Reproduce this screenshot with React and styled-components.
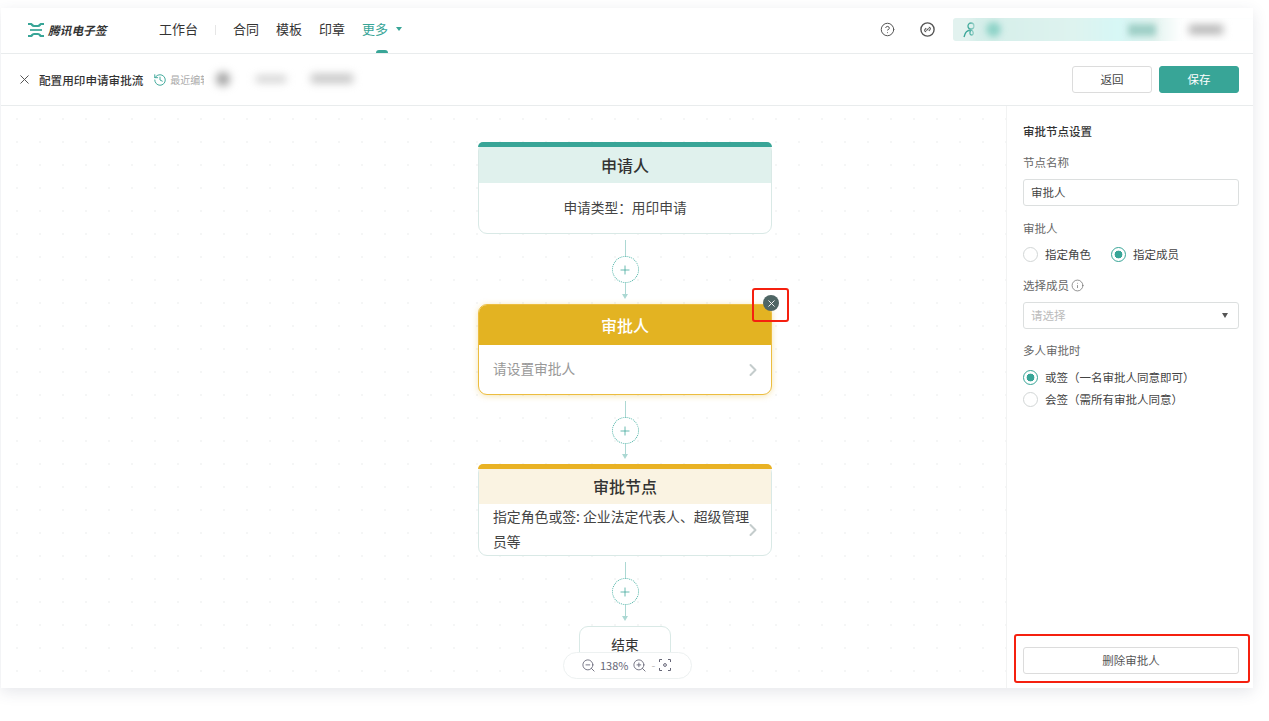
import React from "react";
import styled, { createGlobalStyle } from "styled-components";
import { ChevronRight, CircleHelp, History, Info, Plus, X, ZoomIn, ZoomOut } from "lucide-react";

const GlobalStyle = createGlobalStyle`
  html, body {
    margin: 0;
    background: #fff;
  }
  * {
    box-sizing: border-box;
  }
  body {
    font-family: "Noto Sans CJK SC", "Noto Sans", sans-serif;
    color: #333;
  }
`;

const NAV_ITEMS = ["合同", "模板", "印章"];

const Logo = () => (
  <LogoWrap>
    <svg width="16" height="14" viewBox="0 0 16 14" fill="none" stroke="#38a597" strokeWidth="2.2">
      <path d="M0 1 H3 C4 1 4 3 6 3 H10 C12 3 12 1 13 1 H16" />
      <path d="M2 7 H14" strokeWidth="1.7" />
      <path d="M0 13 H3 C4 13 4 11 6 11 H10 C12 11 12 13 13 13 H16" />
    </svg>
    <LogoText>腾讯电子签</LogoText>
  </LogoWrap>
);

const Connector = ({ height = 70 }) => (
  <ConnectorWrap height={height}>
    <ConnectorLine fixed />
    <AddButton>
      <Plus size={14} strokeWidth={1.3} />
    </AddButton>
    <ConnectorLine />
    <ConnectorArrow />
  </ConnectorWrap>
);

const Radio = ({ checked, children }) => (
  <RadioLabel>
    <RadioDot checked={checked} />
    {children}
  </RadioLabel>
);

const App = () => {
  return (
    <>
      <GlobalStyle />
      <Page>
        <Window>
          <Header>
            <Logo />
            <NavItem>工作台</NavItem>
            <NavDivider />
            {NAV_ITEMS.map(item => (
              <NavItem key={item}>{item}</NavItem>
            ))}
            <NavItem active>
              更多
              <Caret />
              <ActiveDot />
            </NavItem>
            <HeaderRight>
              <HeaderIcon>
                <CircleHelp size={15} strokeWidth={1.6} />
              </HeaderIcon>
              <HeaderIcon last>
                <svg width="15" height="15" viewBox="0 0 15 15" fill="none" stroke="currentColor" strokeWidth="1.4">
                  <circle cx="7.5" cy="7.5" r="6.6" />
                  <path d="M6.2 9.7 a1.4 1.4 0 0 1 -1.2 -2.3 l1.2 -1.2" strokeWidth="1.1" />
                  <path d="M8.8 5.3 a1.4 1.4 0 0 1 1.2 2.3 l-1.2 1.2" strokeWidth="1.1" />
                  <path d="M6.3 8.7 L8.7 6.3" strokeWidth="1.1" />
                </svg>
              </HeaderIcon>
              <UserPill>
                <svg width="13" height="16" viewBox="0 0 13 16" fill="none" stroke="#38a597" strokeWidth="1.3">
                  <circle cx="8" cy="4" r="3" />
                  <path d="M1 15 C2 10 5 8 8 8 C11 9 11 13 8.5 13 C6.5 13 6.5 10 8 8" />
                </svg>
                <PillBlur />
                <PillBlobLeft />
                <PillBlobMiddle />
                <PillBlobRight />
              </UserPill>
            </HeaderRight>
          </Header>

          <SubBar>
            <CloseIcon>
              <X size={15} strokeWidth={1.6} />
            </CloseIcon>
            <SubTitle>配置用印申请审批流</SubTitle>
            <EditInfo>
              <History size={14} strokeWidth={1.6} color="#38a597" />
              最近编辑
              <EditBlur />
              <EditBlobA />
              <EditBlobB />
              <EditBlobC />
            </EditInfo>
            <SubActions>
              <Button>返回</Button>
              <Button primary>保存</Button>
            </SubActions>
          </SubBar>

          <Body>
            <Canvas>
              <FlowColumn>
                <Node>
                  <NodeBar color="#38a597" />
                  <NodeHead height={36}>申请人</NodeHead>
                  <NodeBody center height={50}>申请类型：用印申请</NodeBody>
                </Node>
                <Connector />
                <Node selected>
                  <NodeHead height={40} fill="#e3b322" light>审批人</NodeHead>
                  <NodeBody muted height={49}>
                    请设置审批人
                    <Chevron><ChevronRight size={20} strokeWidth={2.4} /></Chevron>
                  </NodeBody>
                  <NodeDelete>
                    <X size={11} strokeWidth={2} />
                  </NodeDelete>
                  <RedMark />
                </Node>
                <Connector height={69} />
                <Node>
                  <NodeBar color="#e9b224" />
                  <NodeHead height={35} fill="#faf3e2">审批节点</NodeHead>
                  <NodeBody wrap height={51}>
                    指定角色或签: 企业法定代表人、超级管理员等
                    <Chevron><ChevronRight size={20} strokeWidth={2.4} /></Chevron>
                  </NodeBody>
                </Node>
                <Connector />
                <EndNode>结束</EndNode>
              </FlowColumn>
              <ZoomBar>
                <ZoomOut size={15} strokeWidth={1.4} />
                <span>138%</span>
                <ZoomIn size={15} strokeWidth={1.4} />
                <ZoomDash>-</ZoomDash>
                <svg width="12" height="12" viewBox="0 0 12 12" fill="none" stroke="#667" strokeWidth="1">
                  <path d="M0.5 3 V0.5 H3 M9 0.5 H11.5 V3 M11.5 9 V11.5 H9 M3 11.5 H0.5 V9" />
                  <circle cx="6" cy="6" r="1.4" />
                </svg>
              </ZoomBar>
            </Canvas>

            <Panel>
              <PanelTitle>审批节点设置</PanelTitle>
              <FieldLabel gap={9}>节点名称</FieldLabel>
              <TextField>审批人</TextField>
              <FieldLabel top={14} gap={10}>审批人</FieldLabel>
              <RadioRow>
                <Radio>指定角色</Radio>
                <Radio checked>指定成员</Radio>
              </RadioRow>
              <FieldLabel top={15} gap={9}>
                选择成员
                <Info size={13} strokeWidth={1.3} />
              </FieldLabel>
              <TextField placeholder>
                请选择
                <SelectCaret />
              </TextField>
              <FieldLabel top={13} gap={11}>多人审批时</FieldLabel>
              <RadioStack>
                <Radio checked>或签（一名审批人同意即可）</Radio>
                <Radio>会签（需所有审批人同意）</Radio>
              </RadioStack>
              <DeleteWrap>
                <DeleteButton>删除审批人</DeleteButton>
                <DeleteMark />
              </DeleteWrap>
            </Panel>
          </Body>
        </Window>
      </Page>
    </>
  );
};

const Page = styled.div`
  width: 1269px;
  height: 721px;
  padding: 8px 0 0 1px;
  overflow: hidden;
`;

const Window = styled.div`
  width: 1252px;
  height: 680px;
  display: flex;
  flex-direction: column;
  background: #fff;
  box-shadow: 0 4px 14px rgba(60, 70, 100, 0.13);
`;

const Header = styled.header`
  height: 46px;
  flex: none;
  display: flex;
  align-items: center;
  padding: 0 0 2px 27px;
  border-bottom: 1px solid #e9eced;
`;

const LogoWrap = styled.div`
  width: 131px;
  display: flex;
  align-items: center;
  gap: 4px;
`;

const LogoText = styled.span`
  font-size: 11.7px;
  font-weight: 700;
  font-style: italic;
  color: #333;
  padding-bottom: 1px;
`;

const NavItem = styled.div`
  position: relative;
  display: flex;
  align-items: center;
  height: 100%;
  margin-right: 17px;
  padding-bottom: 2px;
  font-size: 13px;
  color: ${props => (props.active ? "#38a597" : "#333")};
`;

const NavDivider = styled.div`
  width: 1px;
  height: 10px;
  margin-right: 17px;
  background: #e6e6e6;
`;

const Caret = styled.span`
  margin-left: 8px;
  border-left: 3.5px solid transparent;
  border-right: 3.5px solid transparent;
  border-top: 4.5px solid #38a597;
`;

const ActiveDot = styled.span`
  position: absolute;
  left: 14px;
  bottom: -2px;
  width: 12px;
  height: 3px;
  border-radius: 6px 6px 0 0;
  background: #38a597;
`;

const HeaderRight = styled.div`
  margin-left: auto;
  display: flex;
  align-items: center;
`;

const HeaderIcon = styled.div`
  display: flex;
  margin-right: ${props => (props.last ? "18px" : "25px")};
  color: #555;
`;

const UserPill = styled.div`
  position: relative;
  width: 300px;
  height: 23px;
  display: flex;
  align-items: center;
  padding-left: 10px;
  border-radius: 3px 0 0 3px;
  background: #e2f2ef;
  overflow: hidden;
`;

const PillBlur = styled.div`
  position: absolute;
  left: 20px;
  top: -4px;
  width: 290px;
  height: 32px;
  background: linear-gradient(90deg, #d4eee9 0%, #def3ef 35%, #d6f7f6 50%, #e2f3ef 62%, #fff 72%);
  filter: blur(3px);
`;

const PillBlobLeft = styled.div`
  position: absolute;
  left: 33px;
  top: 4px;
  width: 15px;
  height: 15px;
  border-radius: 50%;
  background: #8fd3c8;
  filter: blur(3px);
`;

const PillBlobMiddle = styled.div`
  position: absolute;
  left: 175px;
  top: 6px;
  width: 28px;
  height: 12px;
  background: #9fcfc7;
  filter: blur(3px);
`;

const PillBlobRight = styled.div`
  position: absolute;
  left: 236px;
  top: 7px;
  width: 34px;
  height: 9px;
  background: #b0b0b0;
  filter: blur(4px);
`;

const SubBar = styled.div`
  height: 52px;
  flex: none;
  display: flex;
  align-items: center;
  padding: 0 14px 0 16px;
  border-bottom: 1px solid #e9eced;
`;

const CloseIcon = styled.div`
  display: flex;
  margin-right: 7px;
  color: #555;
`;

const SubTitle = styled.div`
  font-size: 11.6px;
  font-weight: 500;
  color: #333;
  margin-right: 10px;
`;

const EditInfo = styled.div`
  position: relative;
  display: flex;
  align-items: center;
  gap: 3px;
  font-size: 10px;
  color: #aaa;
`;

const EditBlur = styled.div`
  position: absolute;
  left: 51px;
  top: -8px;
  width: 160px;
  height: 32px;
  background: #fff;
`;

const EditBlobA = styled.div`
  position: absolute;
  left: 63px;
  top: 0;
  width: 14px;
  height: 14px;
  border-radius: 50%;
  background: #a0a0a0;
  filter: blur(4px);
`;

const EditBlobB = styled.div`
  position: absolute;
  left: 103px;
  top: 4px;
  width: 30px;
  height: 6px;
  background: #c8c8c8;
  filter: blur(4px);
`;

const EditBlobC = styled.div`
  position: absolute;
  left: 158px;
  top: 2px;
  width: 42px;
  height: 9px;
  background: #c4c4c4;
  filter: blur(4px);
`;

const SubActions = styled.div`
  margin-left: auto;
  display: flex;
  gap: 7px;
`;

const Button = styled.button`
  width: 80px;
  height: 27px;
  padding: 0 0 2px;
  border-radius: 3px;
  border: 1px solid ${props => (props.primary ? "#38a597" : "#dcdcdc")};
  background: ${props => (props.primary ? "#38a597" : "#fff")};
  color: ${props => (props.primary ? "#fff" : "#444")};
  font: inherit;
  font-size: 11.5px;
`;

const Body = styled.div`
  flex: 1;
  min-height: 0;
  display: flex;
`;

const Canvas = styled.div`
  position: relative;
  flex: 1;
  overflow: hidden;
  padding: 36px 0 0 477px;
  background-image: radial-gradient(circle, #d6dcdc 0.7px, transparent 1px);
  background-size: 23px 23px;
  background-position: 4.5px 1.5px;
`;

const FlowColumn = styled.div`
  width: 294px;
  display: flex;
  flex-direction: column;
  align-items: center;
`;

const Node = styled.div`
  position: relative;
  width: 100%;
  border-radius: 9px;
  background: #fff;
  border: 1px solid ${props => (props.selected ? "#ecbd3f" : "#d9e9e6")};
  box-shadow: ${props => (props.selected ? "0 1px 6px rgba(227, 179, 34, 0.35)" : "none")};
`;

const NodeBar = styled.div`
  height: 5px;
  margin: -1px -1px 0;
  border-radius: 9px 9px 0 0;
  background: ${props => props.color};
`;

const NodeHead = styled.div`
  height: ${props => props.height}px;
  display: flex;
  align-items: center;
  justify-content: center;
  padding-bottom: 1px;
  background: ${props => props.fill || "#e0f1ed"};
  color: ${props => (props.light ? "#fff" : "#333")};
  font-size: 16px;
  font-weight: 500;
  border-radius: ${props => (props.light ? "8px 8px 0 0" : "0")};
`;

const NodeBody = styled.div`
  position: relative;
  min-height: ${props => props.height}px;
  display: flex;
  align-items: center;
  justify-content: ${props => (props.center ? "center" : "flex-start")};
  padding: ${props => (props.wrap ? "0 18px 1px 14px" : props.muted ? "0 14px 4px" : "0 14px 2px")};
  font-size: ${props => (props.wrap ? "13.85px" : "13.7px")};
  line-height: ${props => (props.wrap ? "25px" : "20px")};
  color: ${props => (props.muted ? "#999" : "#444")};
`;

const Chevron = styled.span`
  position: absolute;
  right: 8px;
  top: 50%;
  display: flex;
  transform: translateY(-50%);
  color: #c4cccc;
`;

const NodeDelete = styled.div`
  position: absolute;
  top: -10px;
  right: -8px;
  width: 16px;
  height: 16px;
  display: flex;
  align-items: center;
  justify-content: center;
  border-radius: 50%;
  background: #4f6665;
  color: #fff;
`;

const RedMark = styled.div`
  position: absolute;
  top: -17px;
  right: -18px;
  width: 37px;
  height: 34px;
  border: 2px solid #f5200f;
  border-radius: 3px;
`;

const ConnectorWrap = styled.div`
  height: ${props => props.height}px;
  padding-top: 6px;
  display: flex;
  flex-direction: column;
  align-items: center;
`;

const ConnectorLine = styled.div`
  width: 1px;
  flex: ${props => (props.fixed ? "none" : "1")};
  height: ${props => (props.fixed ? "16px" : "auto")};
  background: #acd8d3;
`;

const ConnectorArrow = styled.div`
  border-left: 3.5px solid transparent;
  border-right: 3.5px solid transparent;
  border-top: 5px solid #acd8d3;
  margin-bottom: 5px;
`;

const AddButton = styled.div`
  width: 27px;
  height: 27px;
  flex: none;
  display: flex;
  align-items: center;
  justify-content: center;
  border-radius: 50%;
  border: 1.5px dotted #4db3a6;
  background: #fff;
  color: #38a597;
`;

const EndNode = styled.div`
  width: 92px;
  height: 50px;
  padding-top: 7px;
  text-align: center;
  border: 1px solid #d9e9e6;
  border-radius: 9px;
  background: #fff;
  font-size: 13.7px;
  color: #333;
`;

const ZoomBar = styled.div`
  position: absolute;
  left: 562px;
  bottom: 9px;
  width: 129px;
  height: 27px;
  display: flex;
  align-items: center;
  gap: 4px;
  padding: 0 0 1px 17px;
  border: 1px solid #edf1f1;
  border-radius: 14px;
  background: #fff;
  color: #667;
  font-size: 11px;
`;

const ZoomDash = styled.span`
  color: #bbb;
`;

const Panel = styled.aside`
  width: 247px;
  flex: none;
  display: flex;
  flex-direction: column;
  padding: 17px 14px 14px 16px;
  background: #fff;
  border-left: 1px solid #f2f3f3;
`;

const PanelTitle = styled.div`
  font-size: 11.5px;
  font-weight: 500;
  line-height: 16px;
  color: #333;
  margin-bottom: 15px;
`;

const FieldLabel = styled.div`
  display: flex;
  align-items: center;
  gap: 2px;
  font-size: 11.5px;
  line-height: 16px;
  color: #666;
  margin-top: ${props => props.top || 0}px;
  margin-bottom: ${props => props.gap}px;
`;

const TextField = styled.div`
  position: relative;
  height: 27px;
  display: flex;
  align-items: center;
  padding: 0 7px 2px;
  border: 1px solid #dcdfdf;
  border-radius: 3px;
  font-size: 11.5px;
  color: ${props => (props.placeholder ? "#bbb" : "#444")};
`;

const SelectCaret = styled.span`
  position: absolute;
  right: 10px;
  top: 10px;
  border-left: 3.5px solid transparent;
  border-right: 3.5px solid transparent;
  border-top: 5px solid #555;
`;

const RadioRow = styled.div`
  display: flex;
  gap: 20px;
`;

const RadioStack = styled.div`
  display: flex;
  flex-direction: column;
  gap: 6px;
`;

const RadioLabel = styled.div`
  display: flex;
  align-items: center;
  gap: 7px;
  height: 16px;
  font-size: 11.5px;
  color: #444;
`;

const RadioDot = styled.span`
  width: 15px;
  height: 15px;
  flex: none;
  border-radius: 50%;
  border: 1px solid ${props => (props.checked ? "#38a597" : "#d2d6d6")};
  background: ${props => (props.checked ? "radial-gradient(circle, #38a597 0 3.6px, #fff 4.2px)" : "#fff")};
`;

const DeleteWrap = styled.div`
  position: relative;
  margin-top: auto;
`;

const DeleteButton = styled.button`
  width: 100%;
  height: 27px;
  padding: 0 0 2px;
  border: 1px solid #dcdcdc;
  border-radius: 3px;
  background: #fff;
  font: inherit;
  font-size: 11.5px;
  color: #555;
`;

const DeleteMark = styled.div`
  position: absolute;
  left: -9px;
  right: -11px;
  top: -12px;
  bottom: -9px;
  border: 2px solid #f5200f;
  border-radius: 3px;
`;

export default App;
